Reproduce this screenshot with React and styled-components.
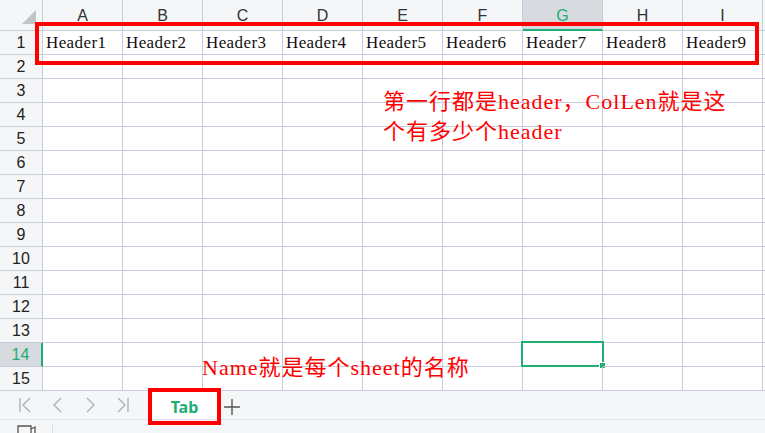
import React from 'react'
import styled, { createGlobalStyle } from 'styled-components'

const GlobalStyle = createGlobalStyle`
  html, body {
    margin: 0;
    padding: 0;
    background: #fff;
    overflow: hidden;
  }
`

const LINE = '#c8cddb'
const HEAD_BG = '#f5f6f8'
const HEAD_ACTIVE = '#d7dadf'
const GREEN = '#21ad74'

const Sheet = styled.div`
  position: relative;
  width: 765px;
  height: 433px;
  overflow: hidden;
  display: flex;
  flex-direction: column;
`

const Grid = styled.div`
  display: grid;
  grid-template-columns: 43px repeat(9, 80px) 1fr;
  grid-template-rows: 31px repeat(15, 24px);
  flex: none;
`

const Corner = styled.div`
  background: ${HEAD_BG};
  border-right: 1px solid ${LINE};
  border-bottom: 1px solid ${LINE};
  display: flex;
  align-items: flex-end;
  justify-content: flex-end;
  padding: 0 6px 6px 0;
`

const ColHead = styled.div`
  background: ${p => (p.$active ? HEAD_ACTIVE : HEAD_BG)};
  color: ${p => (p.$active ? GREEN : '#333')};
  border-right: 1px solid ${LINE};
  border-bottom: ${p => (p.$active ? `2px solid ${GREEN}` : `1px solid ${LINE}`)};
  font-family: "Liberation Sans", "Noto Sans", sans-serif;
  font-size: 16px;
  display: flex;
  align-items: center;
  justify-content: center;
  padding-top: 2px;
  box-sizing: border-box;
`

const RowHead = styled.div`
  background: ${p => (p.$active ? HEAD_ACTIVE : HEAD_BG)};
  color: ${p => (p.$active ? GREEN : '#222')};
  border-right: ${p => (p.$active ? `2px solid ${GREEN}` : `1px solid ${LINE}`)};
  border-bottom: 1px solid ${LINE};
  font-family: "Liberation Sans", "Noto Sans", sans-serif;
  font-size: 16px;
  display: flex;
  align-items: center;
  justify-content: center;
  box-sizing: border-box;
`

const Cell = styled.div`
  position: relative;
  border-right: 1px solid ${LINE};
  border-bottom: 1px solid ${LINE};
  font-family: "Liberation Serif", "Noto Sans CJK SC", serif;
  font-size: 17px;
  letter-spacing: 0.4px;
  color: #111;
  display: flex;
  align-items: center;
  padding-left: 3px;
  white-space: nowrap;
`

const Filler = styled.div`
  background: ${p => (p.$head ? HEAD_BG : '#fff')};
  border-bottom: 1px solid ${LINE};
`

const Selection = styled.div`
  position: absolute;
  left: -2px;
  top: -2px;
  width: 83px;
  height: 26px;
  box-sizing: border-box;
  border: 2px solid ${GREEN};
  pointer-events: none;
  &::after {
    content: '';
    position: absolute;
    right: -4px;
    bottom: -4px;
    width: 5px;
    height: 5px;
    background: ${GREEN};
    border: 1px solid #fff;
  }
`

const TabBar = styled.div`
  height: 28px;
  background: ${HEAD_BG};
  border-bottom: 1px solid #e1e3e8;
  display: flex;
  align-items: stretch;
  flex: none;
`

const NavGroup = styled.div`
  display: flex;
  align-items: center;
  padding-left: 18px;
  width: 130px;
`

const NavBtn = styled.div`
  width: 33px;
  height: 28px;
  display: flex;
  align-items: center;
  justify-content: flex-start;
  color: #a9adb5;
`

const SheetTab = styled.div`
  width: 73px;
  background: #fff;
  color: ${GREEN};
  font-family: "Noto Sans", "Liberation Sans", sans-serif;
  font-weight: 700;
  font-size: 16px;
  display: flex;
  align-items: center;
  justify-content: center;
  padding-top: 4px;
  box-sizing: border-box;
`

const AddBtn = styled.div`
  width: 22px;
  display: flex;
  align-items: center;
  justify-content: center;
  margin-left: 0;
  padding-top: 3px;
  color: #555;
`

const StatusStrip = styled.div`
  flex: 1;
  background: ${HEAD_BG};
  display: flex;
  align-items: flex-start;
  padding-left: 17px;
  padding-top: 5px;
`

const StatusDivider = styled.div`
  width: 1px;
  height: 20px;
  background: #dcdee3;
  margin-left: 15px;
  margin-top: -1px;
`

const RedBox = styled.div`
  position: absolute;
  box-sizing: border-box;
  border: 4px solid #ff0000;
  pointer-events: none;
`

const Note = styled.div`
  position: absolute;
  color: #ff0000;
  font-family: "Liberation Serif", "Noto Sans CJK SC", serif;
  font-size: 22px;
  letter-spacing: 1px;
  line-height: 30px;
  white-space: nowrap;
`

const cols = ['A', 'B', 'C', 'D', 'E', 'F', 'G', 'H', 'I']

const Icon = ({ d }) => (
  <svg width="14" height="16" viewBox="0 0 14 16" fill="none" stroke="currentColor" strokeWidth="1.3">
    <path d={d} />
  </svg>
)

export default function App() {
  const rows = Array.from({ length: 15 }, (_, i) => i + 1)
  return (
    <>
      <GlobalStyle />
      <Sheet>
        <Grid>
          <Corner>
            <svg width="14" height="14" viewBox="0 0 14 14">
              <path d="M14 0 L14 14 L0 14 Z" fill="#c2c4c8" />
            </svg>
          </Corner>
          {cols.map(c => (
            <ColHead key={c} $active={c === 'G'}>{c}</ColHead>
          ))}
          <Filler $head />
          {rows.map(r => (
            <React.Fragment key={r}>
              <RowHead $active={r === 14}>{r}</RowHead>
              {cols.map((c, ci) => (
                <Cell key={c}>
                  {r === 1 ? `Header${ci + 1}` : null}
                  {r === 14 && c === 'G' ? <Selection /> : null}
                </Cell>
              ))}
              <Filler />
            </React.Fragment>
          ))}
        </Grid>

        <TabBar>
          <NavGroup>
            <NavBtn><Icon d="M2 1 V15 M12 1 L5 8 L12 15" /></NavBtn>
            <NavBtn><Icon d="M10 1 L3 8 L10 15" /></NavBtn>
            <NavBtn><Icon d="M4 1 L11 8 L4 15" /></NavBtn>
            <NavBtn><Icon d="M2 1 L9 8 L2 15 M12 1 V15" /></NavBtn>
          </NavGroup>
          <SheetTab>Tab</SheetTab>
          <AddBtn>
            <svg width="18" height="18" viewBox="0 0 18 18" fill="none" stroke="currentColor" strokeWidth="1.4">
              <path d="M9 1 V17 M1 9 H17" />
            </svg>
          </AddBtn>
        </TabBar>

        <StatusStrip>
          <svg width="20" height="12" viewBox="0 0 20 12" fill="none" stroke="#555" strokeWidth="1.3">
            <path d="M1 12 V1 H14 V12 M14 4 L18 2 V12" />
          </svg>
          <StatusDivider />
        </StatusStrip>

        <RedBox style={{ left: 35, top: 22, width: 724, height: 43 }} />
        <RedBox style={{ left: 148, top: 388, width: 73, height: 37 }} />

        <Note style={{ left: 383, top: 87 }}>
          第一行都是header，ColLen就是这<br />个有多少个header
        </Note>
        <Note style={{ left: 202, top: 353 }}>Name就是每个sheet的名称</Note>
      </Sheet>
    </>
  )
}
